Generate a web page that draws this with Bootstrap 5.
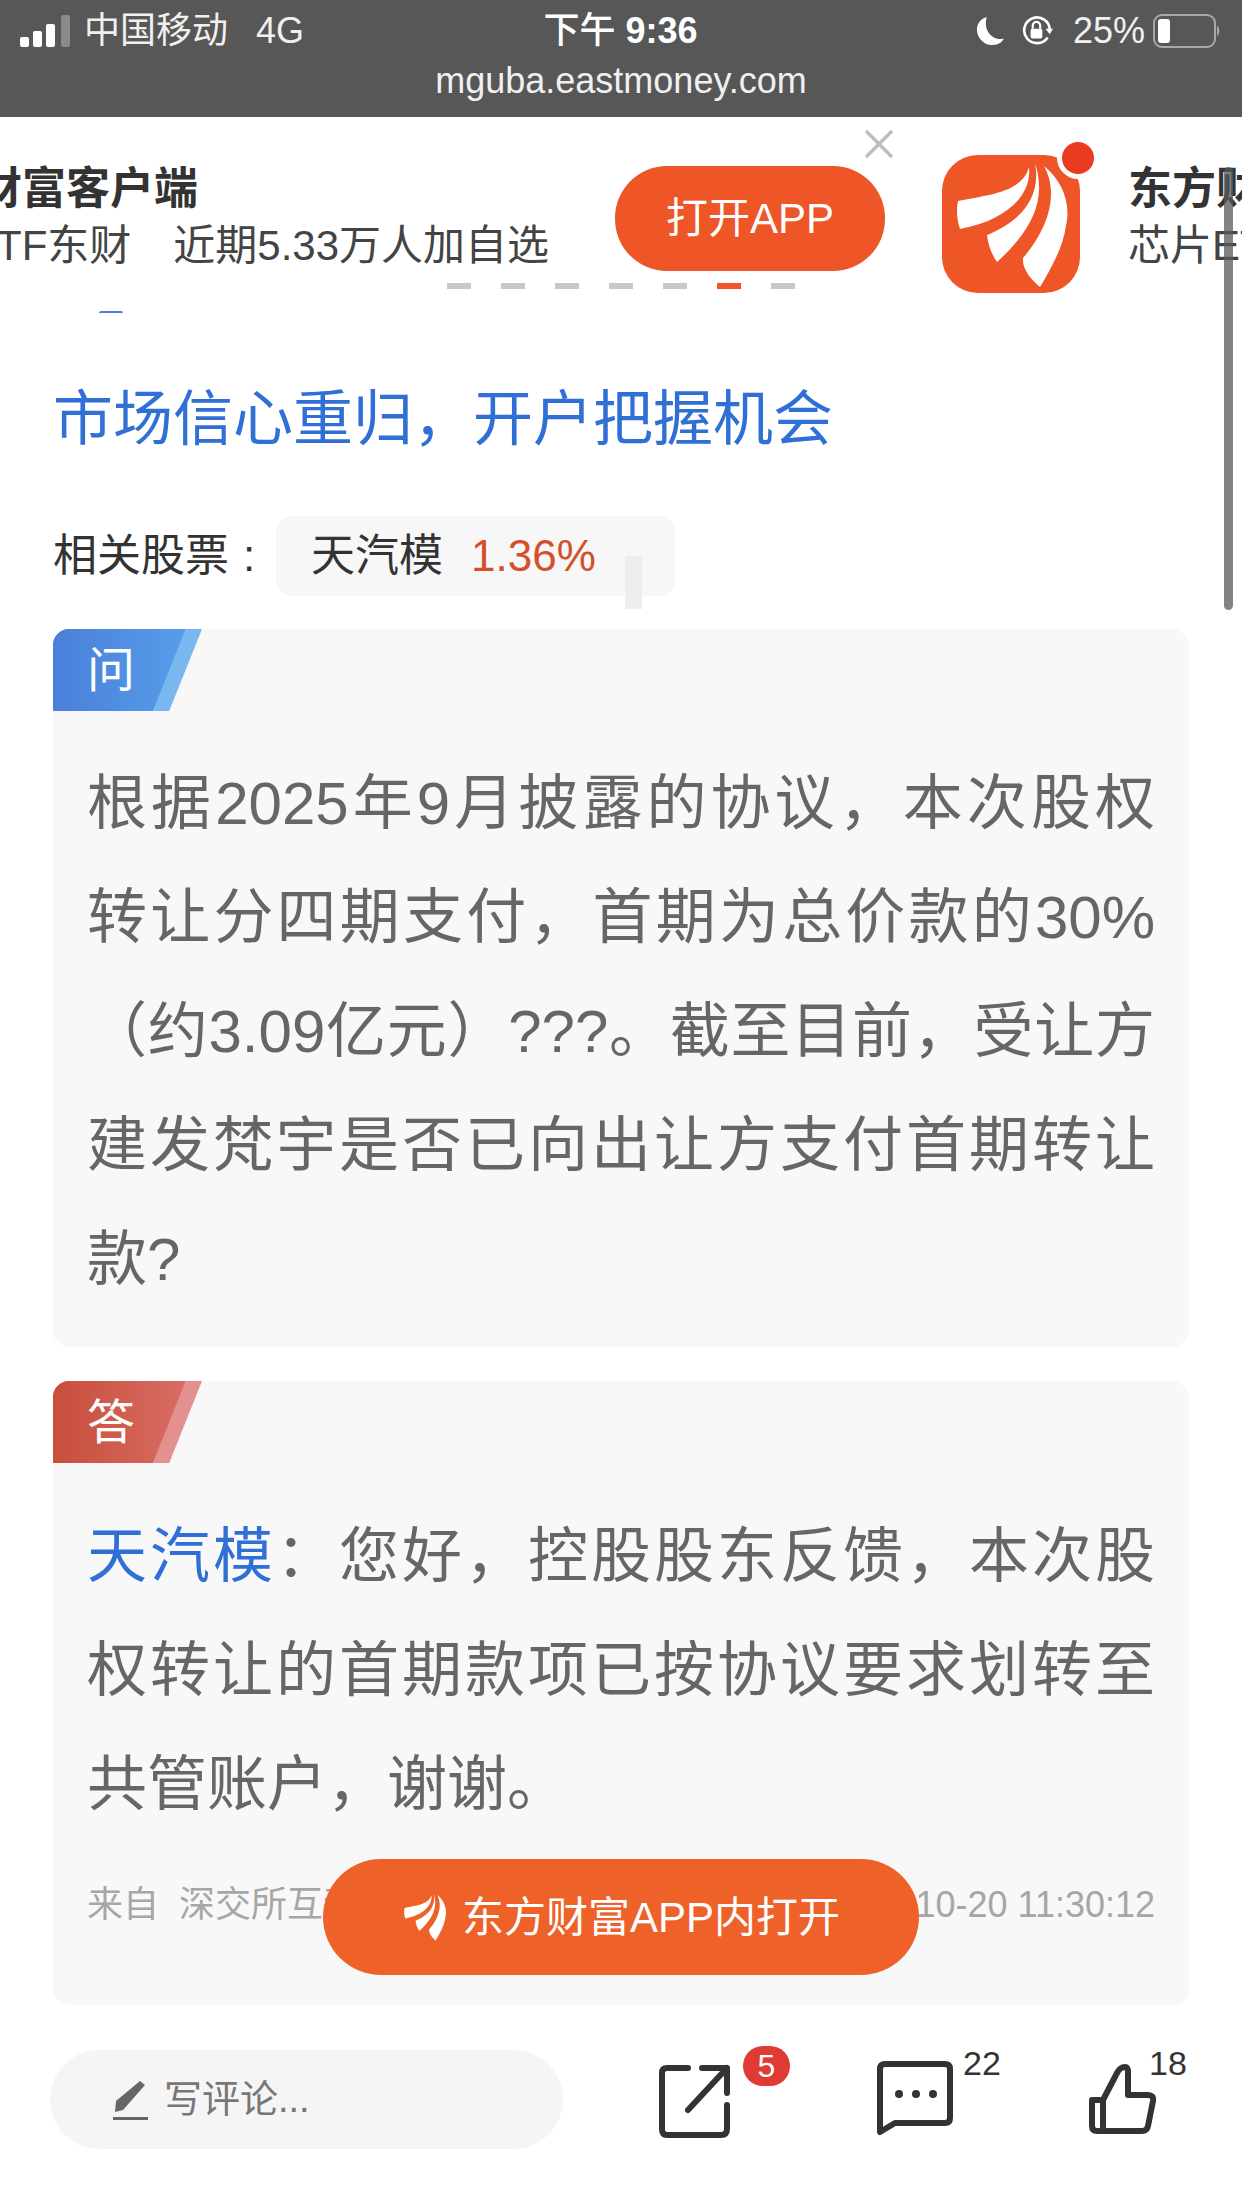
<!DOCTYPE html>
<html lang="zh-CN">
  <head>
    <meta charset="UTF-8" />
    <meta name="viewport" content="width=device-width, initial-scale=1.0" />
    <title>天汽模 问答</title>

    <link
      href="https://cdn.jsdelivr.net/npm/bootstrap@5.3.0/dist/css/bootstrap.min.css"
      rel="stylesheet"
    />

    <style>
      html, body {
        width: 1242px;
        height: 2208px;
        overflow: hidden;
      }
      body {
        position: relative;
        background: #fff;
        font-family: "Liberation Sans", "Noto Sans CJK SC", sans-serif;
      }

      /* status bar */
      .phone-bar {
        height: 117px;
        background: #575757;
        color: #f0f0f0;
        font-size: 36px;
        line-height: 40px;
      }
      .phone-row {
        height: 56px;
        padding: 6px 21px 0 20px;
      }
      .phone-side {
        width: 420px;
      }
      .phone-signal {
        margin-right: 12px;
      }
      .phone-net {
        margin-left: 28px;
      }
      .phone-time {
        font-size: 36px;
        font-weight: 500;
        color: #fff;
      }
      .phone-clock {
        font-weight: 700;
      }
      .phone-url {
        line-height: 40px;
        margin-top: 5px;
      }

      /* ad carousel */
      .ad-strip {
        height: 183px;
        padding-top: 20px;
        position: relative;
      }
      .ad-text {
        width: 725px;
        flex: none;
        margin: -3px 0 0 -110px;
      }
      .ad-name {
        font-size: 44px;
        line-height: 58px;
        font-weight: 700;
        color: #333;
      }
      .ad-sub {
        font-size: 42px;
        line-height: 56px;
        color: #444;
      }
      .ad-sub-first {
        margin-left: -6px;
      }
      .ad-open {
        width: 270px;
        height: 105px;
        flex: none;
        border-radius: 52px;
        background: #ee5527;
        color: #fff;
        font-size: 42px;
        border: 0;
        padding: 0;
      }
      .ad-logo {
        flex: none;
        margin-left: 57px;
      }
      .ad-next {
        margin: -3px 0 0 26px;
        width: 400px;
        flex: none;
      }
      .ad-close {
        position: absolute;
        left: 864px;
        top: 12px;
      }
      .ad-dots {
        position: absolute;
        left: 447px;
        top: 166px;
        gap: 30px;
      }
      .ad-dot {
        width: 24px;
        height: 6px;
        background: #c8c8c8;
      }
      .ad-dot-on {
        background: #ee5527;
      }

      .page-scroll {
        position: absolute;
        left: 1224px;
        top: 167px;
        width: 9px;
        height: 443px;
        border-radius: 5px;
        background: rgba(90, 90, 90, 0.75);
      }

      /* article */
      .post-wrap {
        padding: 0 53px;
      }
      .post-sliver {
        width: 24px;
        height: 2px;
        margin: 11px 0 0 46px;
        background: #4a80db;
        border-radius: 12px 12px 0 0;
      }
      .post-title {
        margin: 65px 0 0;
        font-size: 60px;
        line-height: 84px;
        font-weight: 400;
        color: #2f6fd6;
        white-space: nowrap;
      }
      .stock-row {
        position: relative;
        margin-top: 54px;
        height: 80px;
        font-size: 44px;
        color: #333;
      }
      .stock-label {
        width: 223px;
        flex: none;
      }
      .stock-colon {
        margin-left: 14px;
      }
      .stock-pill {
        width: 399px;
        height: 80px;
        padding-left: 35px;
        background: #f7f7f7;
        border-radius: 16px;
      }
      .stock-pct {
        color: #d4502b;
        margin-left: 28px;
      }
      .stock-blot {
        position: absolute;
        left: 572px;
        top: 40px;
        width: 17px;
        height: 53px;
        background: #eeeeee;
      }

      .qa-box {
        background: #f8f8f8;
        border-radius: 16px;
        overflow: hidden;
        margin-top: 33px;
      }
      .qa-box + .qa-box {
        margin-top: 34px;
      }
      .qa-tag {
        position: relative;
        width: 149px;
        height: 82px;
        color: #fff;
        font-size: 48px;
        line-height: 84px;
        padding-left: 34px;
      }
      .qa-tag > span {
        position: relative;
        z-index: 1;
      }
      .qa-tag::before,
      .qa-tag::after {
        content: "";
        position: absolute;
        inset: 0;
      }
      .qa-tag::before {
        clip-path: polygon(0 0, 100% 0, 78% 100%, 0 100%);
      }
      .qa-tag::after {
        clip-path: polygon(0 0, 89% 0, 67% 100%, 0 100%);
      }
      .qa-ask::before {
        background: #78b8ee;
      }
      .qa-ask::after {
        background: linear-gradient(90deg, #4a7fda, #58a1ea);
      }
      .qa-reply::before {
        background: #e49090;
      }
      .qa-reply::after {
        background: linear-gradient(90deg, #c84e3b, #da7068);
      }
      .qa-body {
        padding: 36px 34px 30px;
        font-size: 60px;
        line-height: 114px;
        color: #666;
      }
      .qa-line {
        text-align: justify;
        text-align-last: justify;
        white-space: nowrap;
      }
      .qa-end {
        text-align-last: left;
      }
      .qa-who {
        color: #2f6fd6;
      }
      .qa-source {
        padding: 0 34px 74px;
        margin-top: 37px;
        font-size: 36px;
        line-height: 52px;
        color: #a6a6a6;
        white-space: nowrap;
      }
      .qa-reply-body {
        padding: 37px 34px 0;
      }

      .open-float {
        position: absolute;
        left: 323px;
        top: 1859px;
        width: 596px;
        height: 116px;
        border-radius: 58px;
        background: #ee622a;
        color: #fff;
        font-size: 42px;
        border: 0;
        gap: 14px;
      }

      /* footer bar */
      .foot-bar {
        position: relative;
        margin-top: 45px;
        height: 99px;
        padding-left: 50px;
      }
      .foot-input {
        width: 513px;
        height: 99px;
        padding-left: 63px;
        border-radius: 50px;
        background: #f5f5f5;
        color: #777;
        font-size: 38px;
        gap: 15px;
      }
      .foot-icon {
        position: absolute;
      }
      .foot-share {
        left: 658px;
        top: 13px;
      }
      .foot-chat {
        left: 875px;
        top: 10px;
      }
      .foot-like {
        left: 1088px;
        top: 14px;
      }
      .foot-count {
        position: absolute;
        top: -7px;
        font-size: 34px;
        line-height: 40px;
        color: #333;
      }
      .foot-n22 {
        left: 963px;
      }
      .foot-n18 {
        left: 1149px;
      }
      .foot-badge {
        position: absolute;
        left: 743px;
        top: -4px;
        width: 47px;
        height: 40px;
        border-radius: 20px;
        background: #e03a35;
        color: #fff;
        font-size: 32px;
        line-height: 40px;
        text-align: center;
      }
    </style>
  </head>

  <body>
    <svg width="0" height="0" class="position-absolute">
      <symbol id="feather" viewBox="10 4 120 132">
        <path d="M16 46C45 40 80 38 87 12C90 40 65 65 18 74C15 65 14 55 16 46Z" />
        <path d="M93 8C105 45 90 75 55 107C50 100 46 90 45 80C75 68 100 45 93 8Z" />
        <path d="M102 11C125 30 128 55 124 70C122 90 110 112 98 132C90 125 80 115 81 103C105 75 118 40 102 11Z" />
      </symbol>
    </svg>

    <div class="phone-bar text-center">
      <div class="phone-row d-flex justify-content-between align-items-center">
        <div class="phone-side d-flex align-items-center text-start">
          <svg width="52" height="32" viewBox="0 0 52 32" class="phone-signal">
            <rect x="0" y="22" width="9" height="10" rx="2" fill="#fff" />
            <rect x="13" y="16" width="9" height="16" rx="2" fill="#fff" />
            <rect x="26" y="9" width="9" height="23" rx="2" fill="#fff" />
            <rect x="41" y="0" width="9" height="32" rx="2" fill="#8a8a8a" />
          </svg>
          <span>中国移动</span>
          <span class="phone-net">4G</span>
        </div>
        <div class="phone-time">下午 <span class="phone-clock">9:36</span></div>
        <div class="phone-side d-flex align-items-center justify-content-end">
          <svg width="30" height="30" viewBox="0 0 28 28" class="me-3">
            <path d="M11 1C4 3 1 9 2 15C3 22 10 28 17 27C21 27 25 25 27 21C17 24 7 14 11 1Z" fill="#fff" />
          </svg>
          <svg width="32" height="32" viewBox="0 0 30 30" class="me-3">
            <path d="M25 21A12 12 0 1 1 27 14" fill="none" stroke="#fff" stroke-width="2.5" />
            <path d="M23 13L30 13L27 18Z" fill="#fff" />
            <rect x="9" y="13" width="11" height="9" rx="1.5" fill="#fff" />
            <path d="M11 13V10A3.5 3.5 0 0 1 18 10V13" fill="none" stroke="#fff" stroke-width="2" />
          </svg>
          <span class="ms-1 me-2">25%</span>
          <svg width="68" height="34" viewBox="0 0 68 34">
            <rect x="1" y="1" width="61" height="32" rx="8" fill="none" stroke="#a8a8a8" stroke-width="2" />
            <rect x="5" y="5" width="12" height="24" rx="3" fill="#fff" />
            <path d="M64 12C67 13 67 21 64 22Z" fill="#a8a8a8" />
          </svg>
        </div>
      </div>
      <div class="phone-url">mguba.eastmoney.com</div>
    </div>

    <div class="ad-strip d-flex align-items-center overflow-hidden text-nowrap">
      <div class="ad-text">
        <div class="ad-name">东方财富客户端</div>
        <div class="ad-sub ad-sub-first">芯片ETF东财&emsp;近期5.33万人加自选</div>
      </div>
      <button class="ad-open">打开APP</button>
      <svg class="ad-logo" width="160" height="160" viewBox="0 -16 160 160">
        <rect x="0" y="0" width="138" height="138" rx="36" fill="#ee5527" />
        <circle cx="136" cy="3" r="21" fill="#fff" />
        <circle cx="136" cy="3" r="16" fill="#ea3a20" />
        <use href="#feather" x="10" y="4" width="120" height="132" fill="#fff" />
      </svg>
      <div class="ad-next">
        <div class="ad-name">东方财富客户端</div>
        <div class="ad-sub">芯片ETF东财</div>
      </div>
      <svg class="ad-close" width="30" height="30" viewBox="0 0 30 30">
        <path d="M2 2L28 28M28 2L2 28" stroke="#bdbdbd" stroke-width="3.5" />
      </svg>
      <div class="ad-dots d-flex">
        <i class="ad-dot"></i><i class="ad-dot"></i><i class="ad-dot"></i><i class="ad-dot"></i><i class="ad-dot"></i><i class="ad-dot ad-dot-on"></i><i class="ad-dot"></i>
      </div>
    </div>

    <div class="post-wrap">
      <div class="post-sliver"></div>
      <h1 class="post-title">市场信心重归，开户把握机会</h1>

      <div class="stock-row d-flex align-items-center">
        <div class="stock-label">相关股票<span class="stock-colon">:</span></div>
        <div class="stock-pill d-flex align-items-center">
          <span>天汽模</span>
          <span class="stock-pct">1.36%</span>
        </div>
        <div class="stock-blot"></div>
      </div>

      <div class="qa-box">
        <div class="qa-tag qa-ask"><span>问</span></div>
        <div class="qa-body">
          <div class="qa-line">根据2025年9月披露的协议，本次股权</div>
          <div class="qa-line">转让分四期支付，首期为总价款的30%</div>
          <div class="qa-line">（约3.09亿元）???。截至目前，受让方</div>
          <div class="qa-line">建发梵宇是否已向出让方支付首期转让</div>
          <div class="qa-line qa-end">款?</div>
        </div>
      </div>

      <div class="qa-box">
        <div class="qa-tag qa-reply"><span>答</span></div>
        <div class="qa-body qa-reply-body">
          <div class="qa-line"><span class="qa-who">天汽模</span>：您好，控股股东反馈，本次股</div>
          <div class="qa-line">权转让的首期款项已按协议要求划转至</div>
          <div class="qa-line qa-end">共管账户，谢谢。</div>
        </div>
        <div class="qa-source d-flex justify-content-between">
          <span>来自&nbsp;&nbsp;深交所互动易</span>
          <span>2025-10-20 11:30:12</span>
        </div>
      </div>
    </div>

    <div class="foot-bar">
      <div class="foot-input d-flex align-items-center">
        <svg width="36" height="42" viewBox="0 0 36 42">
          <path d="M2 33L3 22L27 2L32 6L10 31Z" fill="#666" />
          <rect x="0" y="38" width="35" height="3" fill="#666" />
        </svg>
        <span>写评论...</span>
      </div>

      <svg class="foot-icon foot-share" width="74" height="76" viewBox="0 0 74 76" fill="none" stroke="#333" stroke-width="6" stroke-linecap="round" stroke-linejoin="round">
        <path d="M30 5H9Q4 5 4 10V66Q4 72 9 72H63Q69 72 69 66V42" />
        <path d="M30 47L69 5M44 5H69V30" />
      </svg>
      <div class="foot-badge">5</div>

      <svg class="foot-icon foot-chat" width="80" height="76" viewBox="0 0 80 76" fill="none" stroke="#333" stroke-width="6" stroke-linejoin="round">
        <path d="M5 9Q5 4 10 4H70Q75 4 75 9V58Q75 63 70 63H20L5 72Z" />
        <circle cx="24" cy="34" r="4" fill="#333" stroke="none" />
        <circle cx="41" cy="34" r="4" fill="#333" stroke="none" />
        <circle cx="58" cy="34" r="4" fill="#333" stroke="none" />
      </svg>
      <div class="foot-count foot-n22">22</div>

      <svg class="foot-icon foot-like" width="70" height="72" viewBox="0 0 70 72" fill="none" stroke="#333" stroke-width="6" stroke-linejoin="round">
        <path d="M4 36H15L29 9Q32 3 37 3Q40 3 40 8V31H60Q66 31 65 37L60 62Q59 67 54 67H9Q4 67 4 62Z" />
        <path d="M15 36V67" />
      </svg>
      <div class="foot-count foot-n18">18</div>
    </div>

    <button class="open-float d-flex align-items-center justify-content-center">
      <svg width="46" height="50" fill="#fff"><use href="#feather" /></svg>
      <span>东方财富APP内打开</span>
    </button>

    <div class="page-scroll"></div>

    <script src="https://cdn.jsdelivr.net/npm/bootstrap@5.3.0/dist/js/bootstrap.bundle.min.js"></script>
  </body>
</html>
